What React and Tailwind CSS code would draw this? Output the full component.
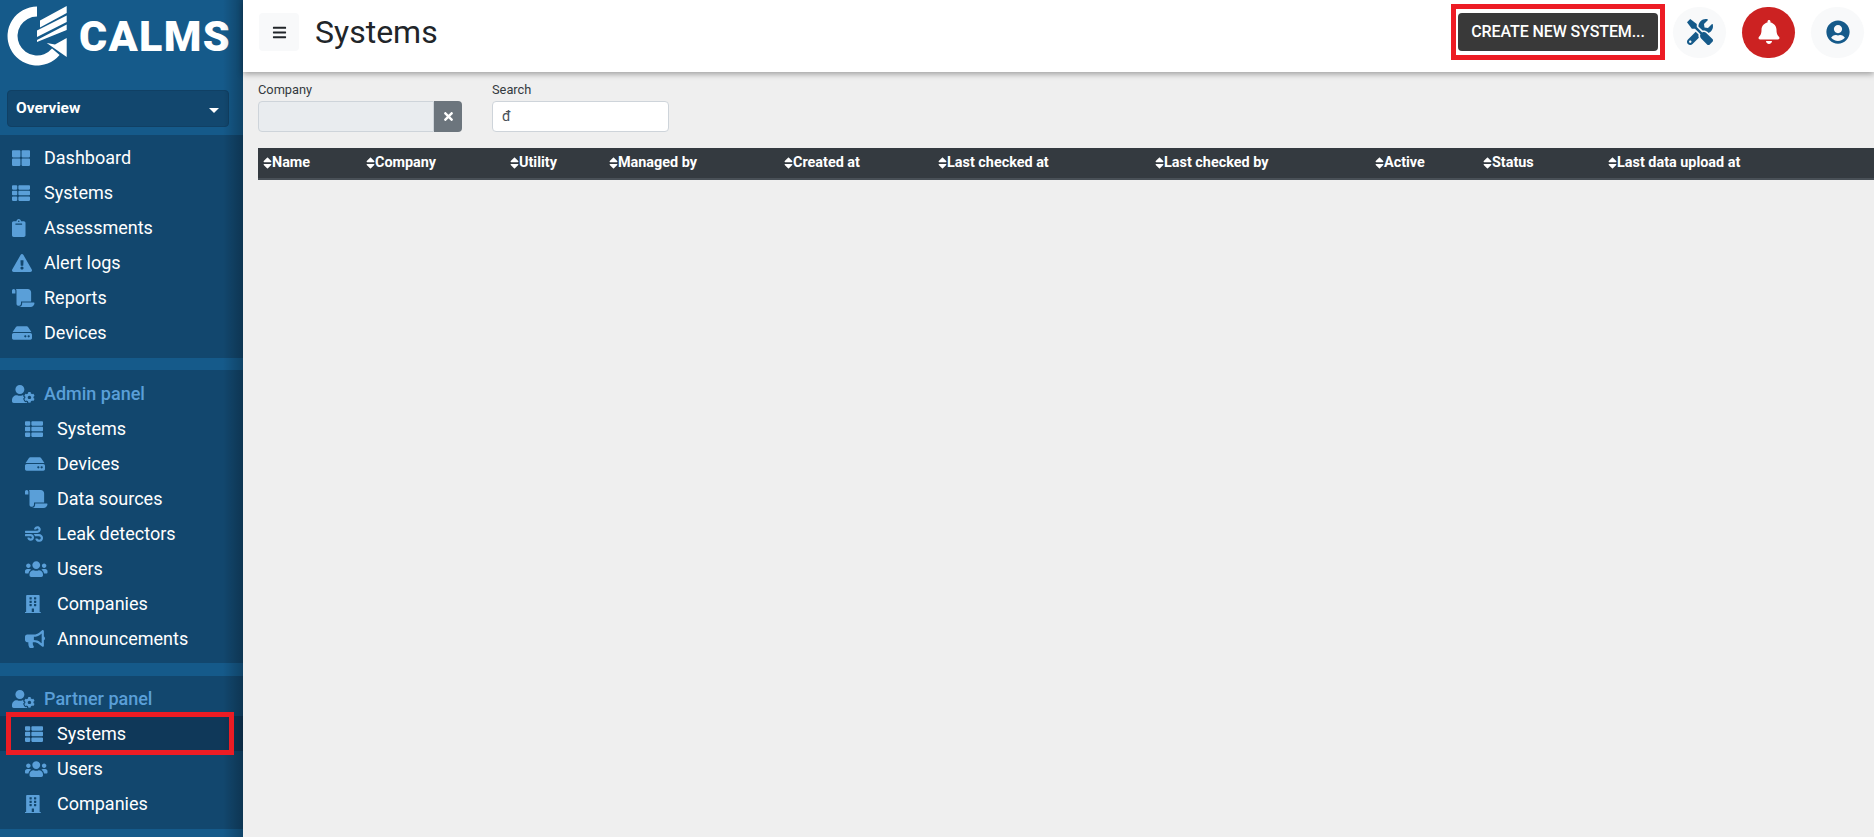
import React from "react";
import { FaThLarge, FaThList, FaClipboard, FaExclamationTriangle, FaScroll, FaHdd, FaUserCog, FaWind, FaUsers, FaBuilding, FaBullhorn, FaTools, FaBell, FaUserCircle, FaBars, FaTimes, FaSort } from "react-icons/fa";

function Logo() {
  return (
    <svg width="70" height="72" viewBox="0 0 70 72" className="shrink-0">
      <path d="M37 6.5 V16.5 A19.5 19.5 0 1 0 52 48.5 L59.6 55 A29.5 29.5 0 1 1 37 6.5 Z" fill="#fff" />
      <path d="M66.7 38 L66.7 57 L46.7 43 L55 44.5 Z" fill="#fff" />
      <path d="M40 20.5 L66.7 6 L66.7 13 L40 27.5 Z M37 30.5 L66.7 15.5 L66.7 22 L37 37 Z M37 40 L66.7 24.5 L66.7 30 L37 42 Z" fill="#fff" />
    </svg>
  );
}

function Item({ icon: Icon, label, sub, active, iconClass }) {
  return (
    <div className={`flex items-center h-[35px] text-[18px] text-white ${sub ? "pl-[25px]" : "pl-[12px]"} ${active ? "bg-[#0f3859]" : ""}`}>
      <span className="w-[32px] shrink-0 flex items-center text-[#5a9fd8]"><Icon className={`h-[18px] ${iconClass}`} /></span>
      <span>{label}</span>
    </div>
  );
}

const Heading = ({ label }) => (
  <div className="flex items-center h-[35px] pl-[12px] text-[18px] font-medium text-[#5a9fd8]">
    <span className="w-[32px] shrink-0 flex items-center"><FaUserCog className="h-[18px] w-[22.5px]" /></span>
    <span>{label}</span>
  </div>
);

const RoundBtn = ({ className, children }) => (
  <div className={`w-[53px] h-[51px] rounded-full flex items-center justify-center ${className}`}>{children}</div>
);

const columns = [
  ["Name", 103], ["Company", 144], ["Utility", 99], ["Managed by", 175], ["Created at", 154],
  ["Last checked at", 217], ["Last checked by", 220], ["Active", 108], ["Status", 125], ["Last data upload at", 271],
];

export default function App() {
  return (
    <div className="flex h-[837px] w-[1874px] overflow-hidden bg-[#efefef] text-[#212529] font-['Roboto',sans-serif]">
      <aside className="relative w-[243px] shrink-0 bg-[#155a8a] overflow-hidden">
        <div className="flex items-center h-[72px]">
          <Logo />
          <span className="ml-[9px] text-[43px] font-black leading-none text-white tracking-[1.3px]">CALMS</span>
        </div>
        <div className="mx-[7px] mt-[18px] h-[37px] w-[222px] rounded bg-[#12476e] flex items-center justify-between pl-[8px] pr-[9px] text-white text-[15.5px] font-bold border border-[#104064]">
          <span>Overview</span>
          <span className="mt-[3px] w-0 h-0 border-x-[5px] border-x-transparent border-t-[5px] border-t-white" />
        </div>
        <div className="mt-[8px] bg-[#12476e] pt-[5px] pb-[8px]">
          <Item icon={FaThLarge} iconClass="w-[18px]" label="Dashboard" />
          <Item icon={FaThList} iconClass="w-[18px]" label="Systems" />
          <Item icon={FaClipboard} iconClass="w-[13.5px]" label="Assessments" />
          <Item icon={FaExclamationTriangle} iconClass="w-[20px]" label="Alert logs" />
          <Item icon={FaScroll} iconClass="w-[22.5px]" label="Reports" />
          <Item icon={FaHdd} iconClass="w-[20px]" label="Devices" />
        </div>
        <div className="mt-[12px] bg-[#12476e] pt-[6px] pb-[7px]">
          <Heading label="Admin panel" />
          <Item sub icon={FaThList} iconClass="w-[18px]" label="Systems" />
          <Item sub icon={FaHdd} iconClass="w-[20px]" label="Devices" />
          <Item sub icon={FaScroll} iconClass="w-[22.5px]" label="Data sources" />
          <Item sub icon={FaWind} iconClass="w-[18px]" label="Leak detectors" />
          <Item sub icon={FaUsers} iconClass="w-[22.5px]" label="Users" />
          <Item sub icon={FaBuilding} iconClass="w-[15.75px]" label="Companies" />
          <Item sub icon={FaBullhorn} iconClass="w-[20px]" label="Announcements" />
        </div>
        <div className="mt-[13px] bg-[#12476e] pt-[5px] pb-[8px]">
          <Heading label="Partner panel" />
          <Item sub active icon={FaThList} iconClass="w-[18px]" label="Systems" />
          <Item sub icon={FaUsers} iconClass="w-[22.5px]" label="Users" />
          <Item sub icon={FaBuilding} iconClass="w-[15.75px]" label="Companies" />
        </div>
        <div className="absolute inset-y-0 right-0 w-[20px] bg-gradient-to-r from-transparent to-black/25 pointer-events-none" />
        <div className="absolute left-[6px] top-[712px] w-[228px] h-[43px] border-[5px] border-[#ed1c24]" />
      </aside>

      <main className="flex-1 min-w-0 flex flex-col">
        <header className="relative h-[72px] bg-white shadow-[0_2px_6px_rgba(0,0,0,0.35)] flex items-center pl-[16px] pr-[10px] pb-[8px]">
          <div className="w-[40px] h-[38px] rounded bg-[#f8f9fa] flex items-center justify-center text-[#212529]"><FaBars size={15} /></div>
          <h1 className="ml-[16px] text-[32px] leading-none">Systems</h1>
          <div className="ml-auto flex items-center">
            <div className="border-[5px] border-[#ed1c24] px-[2px] py-[4px]">
              <div className="w-[200px] h-[38px] rounded bg-[#393939] text-white text-[16px] font-medium tracking-[-0.1px] flex items-center justify-center whitespace-nowrap">CREATE NEW SYSTEM...</div>
            </div>
            <RoundBtn className="ml-[8px] bg-[#f8f9fa] text-[#155a8a]"><FaTools size={26} /></RoundBtn>
            <RoundBtn className="ml-[16px] bg-[#cc2222] text-white"><FaBell size={24} /></RoundBtn>
            <RoundBtn className="ml-[16px] bg-[#f8f9fa] text-[#155a8a]"><FaUserCircle size={24} /></RoundBtn>
          </div>
        </header>
        <div className="pl-[15px] pt-[11px]">
          <div className="flex gap-[30px]">
            <div>
              <div className="text-[12.8px] leading-[14px] mb-[4px] text-[#343a40]">Company</div>
              <div className="flex w-[204px] h-[31px]">
                <div className="flex-1 bg-[#e9ecef] border border-[#ced4da] rounded-l" />
                <div className="w-[28px] bg-[#6c757d] rounded-r text-white flex items-center justify-center"><FaTimes size={13} /></div>
              </div>
            </div>
            <div>
              <div className="text-[12.8px] leading-[14px] mb-[4px] text-[#343a40]">Search</div>
              <div className="w-[177px] h-[31px] bg-white border border-[#ced4da] rounded pl-[9px] text-[14.4px] text-[#495057] flex items-center">đ</div>
            </div>
          </div>
          <div className="mt-[16px] h-[32px] bg-[#343a40] border-b-2 border-[#495057] flex items-center text-white text-[14.4px] font-bold">
            {columns.map(([name, w]) => (
              <div key={name} style={{ width: w }} className="shrink-0 pl-[5px] flex items-center">
                <FaSort className="shrink-0 w-[9px] h-[14px]" />
                <span className="whitespace-nowrap">{name}</span>
              </div>
            ))}
          </div>
        </div>
      </main>
    </div>
  );
}
